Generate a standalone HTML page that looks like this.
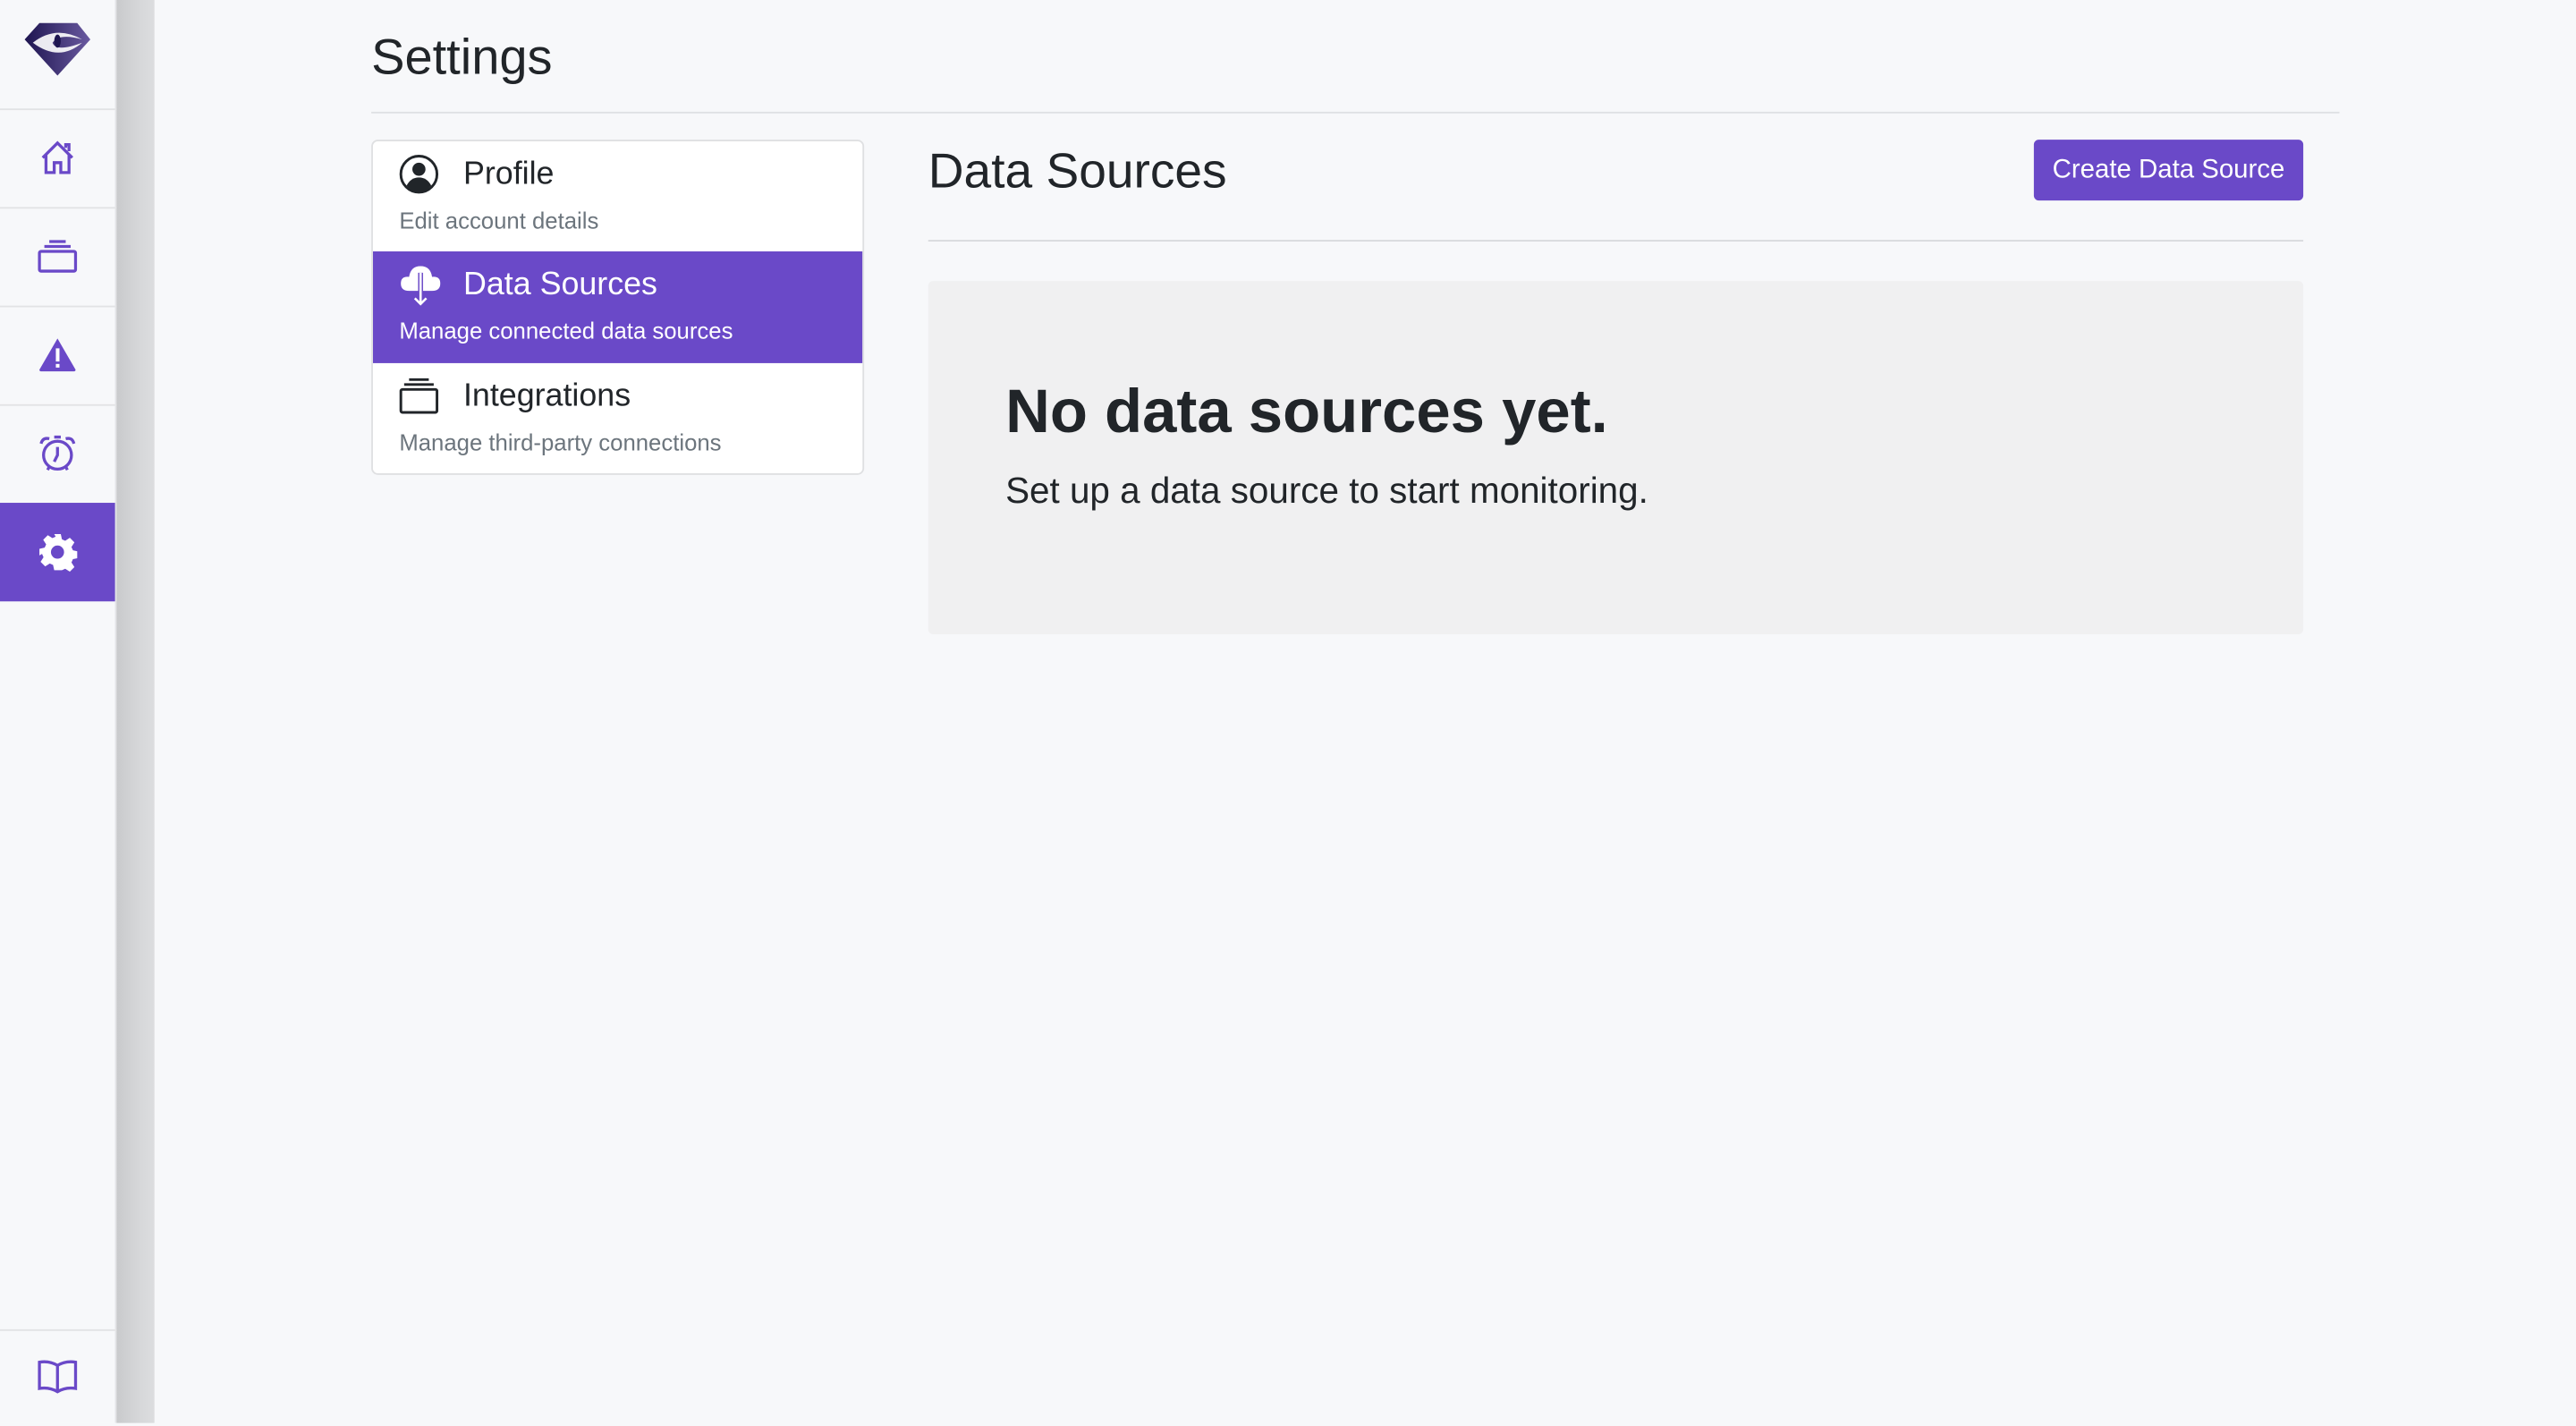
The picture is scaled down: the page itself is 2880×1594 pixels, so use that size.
<!DOCTYPE html>
<html><head><meta charset="utf-8"><style>
*{margin:0;padding:0;box-sizing:border-box}
html,body{width:2880px;height:1590px;overflow:hidden;background:#f7f8fa;font-family:"Liberation Sans",sans-serif}
#w{position:absolute;left:0;top:0;width:1568px;height:866px;transform:scale(1.836735);transform-origin:0 0;background:#f7f8fa}
.side{position:absolute;left:0;top:0;width:71px;height:866px;background:#f7f8fa;border-right:1px solid #e3e4e6}
.shadow{position:absolute;left:71px;top:0;width:23px;height:866px;background:linear-gradient(90deg,#c9cacc,#d6d7d9 60%,#dcdddf)}
.sep{position:absolute;left:0;width:70px;height:1px;background:#e2e3e5}
.ic{position:absolute;left:0;width:70px;height:60px;display:flex;align-items:center;justify-content:center}
.abs{position:absolute}
.card{position:absolute;left:226px;top:85px;width:300px;height:204px;background:#fff;border:1px solid #dfe0e2;border-radius:4px;overflow:hidden}
.item{position:absolute;left:0;width:298px;height:68px}
.item .t{position:absolute;left:55px;top:9px;font-size:19.5px;color:#212529}
.item .d{position:absolute;left:16px;top:40px;font-size:14px;color:#6c757d}
.item svg{position:absolute;left:16px;top:8px}
</style></head><body><div id="w">
<div class="side">
 <svg class="abs" style="left:14px;top:12px" width="42" height="36" viewBox="0 0 42 36"><defs><linearGradient id="g" x1="0" x2="1"><stop offset="0" stop-color="#1e1550"/><stop offset="1" stop-color="#6a5aa0"/></linearGradient></defs><path d="M10 2 L33 2 L41 12 L21 34 L1 12 Z" fill="url(#g)"/><path d="M6 14 Q20 3 36 12 Q22 8 18 14 Q20 20 36 14 Q22 26 6 14Z" fill="#fff" opacity=".9"/><ellipse cx="21" cy="13" rx="2" ry="4" fill="#1e1550"/></svg>
 <div class="sep" style="top:66px"></div><div class="sep" style="top:126px"></div><div class="sep" style="top:186px"></div><div class="sep" style="top:246px"></div>
 <div class="ic" style="top:66px"><svg width="22" height="22" viewBox="0 0 22 22" fill="none" stroke="#6a49c8" stroke-width="1.8"><path d="M2 11 L11 2 L20 11 M4 9 V20 H9 V14 H13 V20 H18 V9 M16 5 V3 H18 V7"/></svg></div>
 <div class="ic" style="top:126px"><svg width="24" height="22" viewBox="0 0 24 22" fill="none" stroke="#6a49c8" stroke-width="1.8"><rect x="1" y="8" width="22" height="12" rx="1"/><path d="M4 5 H20 M7 2 H17"/></svg></div>
 <div class="ic" style="top:186px"><svg width="24" height="22" viewBox="0 0 24 22"><path d="M12 1 L23 20 Q23 21 22 21 H2 Q1 21 1 20 Z" fill="#6a49c8"/><rect x="11" y="7" width="2.2" height="8" fill="#fff"/><rect x="11" y="16.5" width="2.2" height="2.2" fill="#fff"/></svg></div>
 <div class="ic" style="top:246px"><svg width="24" height="24" viewBox="0 0 24 24" fill="none" stroke="#6a49c8" stroke-width="1.8"><circle cx="12" cy="13" r="8.5"/><path d="M12 8 V13 L10 17 M2 6 Q3 2 7 3 M22 6 Q21 2 17 3 M10 2 H14 M6 22 L7 20 M18 22 L17 20"/></svg></div>
 <div class="abs" style="left:0;top:306px;width:70px;height:60px;background:#6a49c8;display:flex;align-items:center;justify-content:center"><svg width="24" height="24" viewBox="0 0 24 24"><path fill="#fff" fill-rule="evenodd" d="M10 1h4l.7 3.2 2 .9 2.8-1.8 2.8 2.8-1.8 2.8.9 2 3.2.7v4l-3.2.7-.9 2 1.8 2.8-2.8 2.8-2.8-1.8-2 .9L14 23h-4l-.7-3.2-2-.9-2.8 1.8-2.8-2.8 1.8-2.8-.9-2L1 14v-4l3.2-.7.9-2-1.8-2.8 2.8-2.8 2.8 1.8 2-.9zM12 8a4 4 0 100 8 4 4 0 000-8z"/></svg></div>
 <div class="sep" style="top:809px"></div>
 <div class="ic" style="top:808px"><svg width="26" height="22" viewBox="0 0 26 22" fill="none" stroke="#6a49c8" stroke-width="1.8"><path d="M13 4 Q8 1 2 2 V18 Q8 17 13 20 Q18 17 24 18 V2 Q18 1 13 4 V20"/></svg></div>
</div>
<div class="shadow"></div>
<div class="abs" style="left:226px;top:18px;font-size:30.5px;color:#212529">Settings</div>
<div class="abs" style="left:226px;top:68px;width:1198px;height:1px;background:#dee0e3"></div>
<div class="card">
 <div class="item" style="top:0"><svg width="24" height="24" viewBox="0 0 24 24"><circle cx="12" cy="12" r="11" fill="none" stroke="#212529" stroke-width="1.6"/><circle cx="12" cy="9" r="4" fill="#212529"/><path d="M4.5 19 Q7 14 12 14 Q17 14 19.5 19 Q16 23 12 23 Q8 23 4.5 19Z" fill="#212529"/></svg><div class="t">Profile</div><div class="d">Edit account details</div></div>
 <div class="item" style="top:67px;background:#6a49c8"><svg width="26" height="26" viewBox="0 0 26 26"><path d="M6 16 Q1 16 1 11.5 Q1 7 6 7.5 Q7 1 13 1 Q19 1 20 7.5 Q25 7 25 11.5 Q25 16 20 16Z" fill="#fff"/><path d="M13 5 V24 M9 20 L13 24 L17 20" stroke="#6a49c8" stroke-width="3" fill="none"/><path d="M13 5 V24 M9.5 20.5 L13 24 L16.5 20.5" stroke="#fff" stroke-width="1.4" fill="none"/></svg><div class="t" style="color:#fff">Data Sources</div><div class="d" style="color:#fff">Manage connected data sources</div></div>
 <div class="item" style="top:135px"><svg width="24" height="24" viewBox="0 0 24 24" fill="none" stroke="#212529" stroke-width="1.6"><rect x="1" y="8" width="22" height="14" rx="1"/><path d="M3 5 H21 M6 2 H18"/></svg><div class="t">Integrations</div><div class="d">Manage third-party connections</div></div>
</div>
<div class="abs" style="left:565px;top:88px;font-size:30px;color:#212529">Data Sources</div>
<div class="abs" style="left:1238px;top:85px;width:164px;height:37px;background:#6a49c8;border-radius:3px;color:#fff;font-size:16px;display:flex;align-items:center;justify-content:center">Create Data Source</div>
<div class="abs" style="left:565px;top:146px;width:837px;height:1px;background:#d8dadd"></div>
<div class="abs" style="left:565px;top:171px;width:837px;height:215px;background:#f0f0f1;border-radius:3px"></div>
<div class="abs" style="left:612px;top:229px;font-size:37.5px;font-weight:bold;color:#212529">No data sources yet.</div>
<div class="abs" style="left:612px;top:286px;font-size:22px;color:#212529">Set up a data source to start monitoring.</div>
</div></body></html>
